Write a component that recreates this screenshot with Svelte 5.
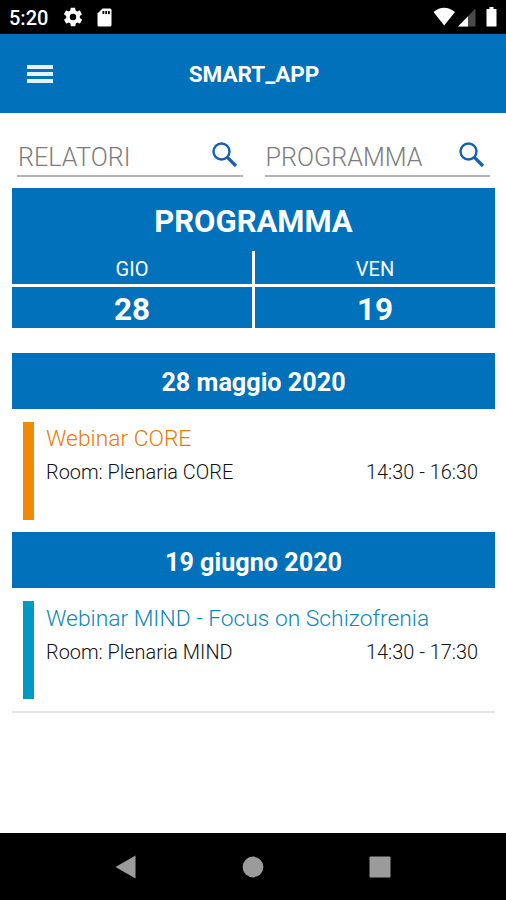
<script>
  const filters = ['RELATORI', 'PROGRAMMA'];

  const days = [
    { name: 'GIO', number: 28 },
    { name: 'VEN', number: 19 },
  ];

  const sections = [
    {
      date: '28 maggio 2020',
      title: 'Webinar CORE',
      room: 'Plenaria CORE',
      time: '14:30 - 16:30',
      theme: 'orange',
    },
    {
      date: '19 giugno 2020',
      title: 'Webinar MIND - Focus on Schizofrenia',
      room: 'Plenaria MIND',
      time: '14:30 - 17:30',
      theme: 'teal',
    },
  ];
</script>

<div class="screen">
  <div class="status">
    <span class="clock">5:20</span>
    <svg class="gear" width="22" height="22" viewBox="0 0 24 24" fill="#fff">
      <path d="M19.4 13c0-.3.1-.6.1-1s0-.7-.1-1l2.1-1.700c.2-.1.2-.4.1-.6l-2-3.500c-.1-.2-.4-.3-.6-.2l-2.500 1c-.5-.4-1.100-.7-1.700-1l-.4-2.600c0-.2-.2-.4-.5-.4h-4c-.2 0-.5.2-.5.4l-.4 2.600c-.6.3-1.200.6-1.700 1l-2.500-1c-.2-.1-.5 0-.6.2l-2 3.500c-.1.2-.1.5.1.6L4.600 11c0 .3-.1.6-.1 1s0 .7.1 1l-2.100 1.700c-.2.1-.2.4-.1.6l2 3.500c.1.2.4.3.6.2l2.500-1c.5.4 1.100.7 1.700 1l.4 2.600c0 .2.2.4.5.4h4c.2 0 .5-.2.5-.4l.4-2.600c.6-.3 1.200-.6 1.700-1l2.500 1c.2.1.5 0 .6-.2l2-3.500c.1-.2.1-.5-.1-.6L19.400 13zM12 15.500a3.500 3.500 0 1 1 0-7 3.500 3.500 0 0 1 0 7z" />
    </svg>
    <svg class="card" width="15" height="19" viewBox="0 0 15 19">
      <path d="M5.500 0.500H13a1.500 1.500 0 0 1 1.500 1.500V17a1.500 1.500 0 0 1-1.500 1.500H2A1.500 1.500 0 0 1 .5 17V5.500z" fill="#fff" />
      <path d="M5.500 3h1.800v3H5.500zM8.300 3h1.800v3H8.300zM11 3h1.800v3H11z" fill="#000" />
    </svg>
    <svg class="signals" width="66" height="20" viewBox="0 0 66 20">
      <path d="M0.500 5Q11 -3.500 22 5L11.200 18.500z" fill="#fff" />
      <path d="M42.500 1.500V19.500H25z" fill="#4a4a4a" />
      <path d="M35 9.200V19.500H25z" fill="#fff" />
      <path d="M53.500 2h3V0h4v2h3v17.500h-10V2z" fill="#fff" />
    </svg>
  </div>

  <header>
    <button class="menu" aria-label="Menu">
      <i></i>
      <i></i>
      <i></i>
    </button>
    <h1>SMART_APP</h1>
  </header>

  <main>
    <div class="filters">
      {#each filters as filter}
        <div class="filter">
          <span>{filter}</span>
          <svg width="26" height="26" viewBox="0 0 26 26" fill="none" stroke="#1560b2">
            <circle cx="9.500" cy="9.500" r="8" stroke-width="2.400" />
            <path d="M15.200 15.200L24 24" stroke-width="3.200" />
          </svg>
        </div>
      {/each}
    </div>

    <div class="calendar">
      <h2>PROGRAMMA</h2>
      <div class="days">
        {#each days as day}
          <div class="day">{day.name}</div>
        {/each}
        {#each days as day}
          <div class="number">{day.number}</div>
        {/each}
      </div>
    </div>

    {#each sections as section}
      <section>
        <h3>{section.date}</h3>
        <div class="event {section.theme}">
          <div class="title">{section.title}</div>
          <div class="details">
            <span class="room">Room: {section.room}</span>
            <span class="time">{section.time}</span>
          </div>
        </div>
      </section>
    {/each}
    <hr />
  </main>

  <nav>
    <svg width="21" height="24" viewBox="0 0 21 24"><path d="M0.500 12L20.500 0.500V23.500z" /></svg>
    <svg width="22" height="22" viewBox="0 0 22 22"><circle cx="11" cy="11" r="10.400" /></svg>
    <svg width="22" height="22" viewBox="0 0 22 22"><rect x="0.500" y="0.500" width="21" height="21" rx="1" /></svg>
  </nav>
</div>

<style>
  :global(body) {
    background: #fff;
  }

  .screen {
    display: flex;
    flex-direction: column;
    width: 506px;
    height: 900px;
    overflow: hidden;
    font-family: Roboto, sans-serif;
    color: #111;
  }

  .status {
    display: flex;
    align-items: center;
    box-sizing: border-box;
    height: 34px;
    padding: 0 7px 0 9px;
    background: #000;
    color: #fff;
  }

  .clock {
    width: 53px;
    font-size: 20px;
    font-weight: 500;
    line-height: 34px;
    padding-top: 2px;
  }

  .card {
    margin-left: 13px;
  }

  .signals {
    margin-left: auto;
  }

  header {
    display: grid;
    grid-template-columns: 80px 1fr 80px;
    align-items: center;
    flex: none;
    height: 79px;
    background: #0071ba;
    color: #fff;
  }

  .menu {
    display: flex;
    flex-direction: column;
    gap: 3px;
    width: 26px;
    margin-left: 27px;
    padding: 0;
    border: none;
    background: none;
  }

  .menu i {
    height: 4px;
    background: #e9effb;
  }

  h1, h2, h3 {
    margin: 0;
    text-align: center;
  }

  h1 {
    font-size: 22.500px;
    font-weight: 700;
    line-height: 28px;
    padding-left: 2px;
  }

  main {
    flex: 1;
    padding: 0 11px 0 12px;
  }

  .filters {
    display: flex;
    gap: 22px;
    padding: 24px 5px 0 5px;
  }

  .filter {
    display: flex;
    justify-content: space-between;
    flex: 1;
    box-sizing: border-box;
    height: 40px;
    padding: 5px 5px 0 1px;
    border-bottom: 2px solid #b3b3b3;
    color: #7d7d7d;
    font-size: 25.200px;
    font-weight: 300;
    line-height: 32px;
  }

  .calendar {
    margin: 11px 0 25px;
    background: #0071ba;
    color: #fff;
    text-align: center;
  }

  h2 {
    height: 63px;
    font-size: 31px;
    font-weight: 700;
    line-height: 67px;
  }

  .days {
    display: grid;
    grid-template-columns: 1fr 1fr;
    gap: 3px;
    background: #fff;
  }

  .day, .number {
    background: #0071ba;
  }

  .day {
    height: 33px;
    font-size: 20px;
    line-height: 36px;
  }

  .number {
    height: 41px;
    font-size: 31.500px;
    font-weight: 700;
    line-height: 45px;
  }

  h3 {
    height: 56px;
    background: #0071ba;
    color: #fff;
    font-size: 25.200px;
    font-weight: 700;
    line-height: 60px;
  }

  .event {
    box-sizing: border-box;
    height: 98px;
    margin: 13px 17px 12px 11px;
    border-left: 11px solid;
    padding-left: 12px;
  }

  section + section h3 {
    line-height: 61px;
  }

  section + section .title {
    padding-top: 1px;
  }

  .orange {
    border-color: #f18a00;
  }

  .teal {
    border-color: #0099c4;
  }

  .title {
    font-size: 22.800px;
    font-weight: 300;
    line-height: 34px;
  }

  .orange .title {
    color: #e97a0c;
  }

  .teal .title {
    color: #0d88b8;
  }

  .details {
    display: flex;
    justify-content: space-between;
    font-size: 19.900px;
    font-weight: 300;
    line-height: 34px;
  }

  hr {
    height: 2px;
    margin: 0;
    border: none;
    background: #e6e6e6;
  }

  nav {
    display: flex;
    align-items: center;
    justify-content: space-between;
    box-sizing: border-box;
    height: 67px;
    padding: 0 115px;
    background: #000;
    fill: #9b9b9b;
  }
</style>
